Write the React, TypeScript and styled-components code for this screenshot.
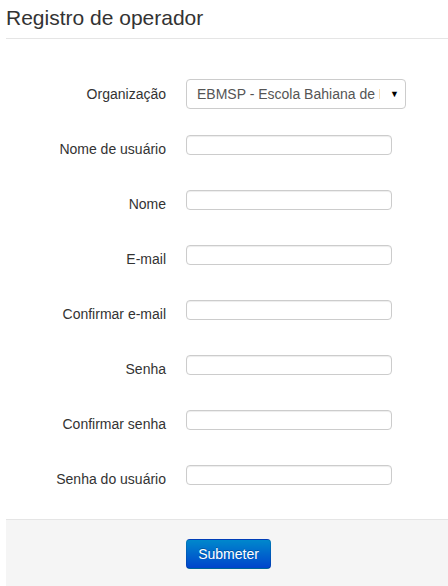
import React from "react";
import styled, { createGlobalStyle } from "styled-components";

const Global = createGlobalStyle`
  html, body { margin: 0; padding: 0; background: #fff; }
  body { font-family: "Liberation Sans", Arial, sans-serif; color: #333; font-size: 14px; }
  * { box-sizing: border-box; }
`;

const Page = styled.div`
  padding-left: 6px;
  width: 448px;
  overflow: hidden;
`;

const Title = styled.h1`
  margin: 0;
  padding: 6px 0 8px;
  font-size: 21px;
  font-weight: normal;
  line-height: 24px;
  color: #333;
  border-bottom: 1px solid #e5e5e5;
`;

const Form = styled.form`
  display: flex;
  flex-direction: column;
  padding-top: 40px;
`;

const Row = styled.div<{ $gap: number }>`
  display: grid;
  grid-template-columns: 160px 1fr;
  column-gap: 20px;
  align-items: center;
  min-height: 30px;
  margin-bottom: ${(p) => p.$gap}px;
`;

const Label = styled.label<{ $drop: number }>`
  text-align: right;
  font-size: 14px;
  line-height: 20px;
  color: #333;
  padding-top: ${(p) => p.$drop}px;
`;

const Input = styled.input`
  width: 206px;
  height: 20px;
  border: 1px solid #ccc;
  border-radius: 4px;
  background: #fff;
  box-shadow: inset 0 1px 1px rgba(0, 0, 0, 0.075);
  padding: 0 6px;
  font-family: inherit;
  font-size: 14px;
  outline: none;
`;

const Select = styled.div`
  width: 220px;
  height: 30px;
  border: 1px solid #ccc;
  border-radius: 4px;
  background: #fff;
  display: flex;
  align-items: center;
  padding: 0 6px 0 10px;
`;

const SelectText = styled.span`
  width: 183px;
  overflow: hidden;
  white-space: nowrap;
  color: #555;
  font-size: 14px;
  line-height: 20px;
`;

const Arrow = styled.span`
  margin-left: auto;
  font-size: 9px;
  color: #000;
  line-height: 1;
`;

const Footer = styled.div`
  margin-top: 29px;
  background: #f5f5f5;
  border-top: 1px solid #e5e5e5;
  padding: 19px 0 40px 180px;
`;

const Button = styled.button`
  width: 85px;
  height: 30px;
  border: 1px solid #0044b3;
  border-color: rgba(0, 0, 0, 0.1) rgba(0, 0, 0, 0.1) rgba(0, 0, 0, 0.25);
  border-radius: 4px;
  background: linear-gradient(to bottom, #0088cc, #0044cc);
  color: #fff;
  font-family: "Liberation Sans", Arial, sans-serif;
  font-size: 14px;
  line-height: 20px;
  padding: 0;
  text-shadow: 0 -1px 0 rgba(0, 0, 0, 0.25);
  cursor: pointer;
`;

const fields = [
  "Nome de usuário",
  "Nome",
  "E-mail",
  "Confirmar e-mail",
  "Senha",
  "Confirmar senha",
  "Senha do usuário",
];

export default function App() {
  return (
    <>
      <Global />
      <Page>
        <Title>Registro de operador</Title>
        <Form onSubmit={(e) => e.preventDefault()}>
          <Row $gap={21}>
            <Label $drop={0}>Organização</Label>
            <Select>
              <SelectText>EBMSP - Escola Bahiana de Medicina e Saúde Pública</SelectText>
              <Arrow>▼</Arrow>
            </Select>
          </Row>
          {fields.map((f, i) => (
            <Row key={f} $gap={i === fields.length - 1 ? 0 : 25}>
              <Label $drop={7}>{f}</Label>
              <Input type={f.startsWith("Senha") || f === "Confirmar senha" ? "password" : "text"} />
            </Row>
          ))}
          <Footer>
            <Button type="submit">Submeter</Button>
          </Footer>
        </Form>
      </Page>
    </>
  );
}
